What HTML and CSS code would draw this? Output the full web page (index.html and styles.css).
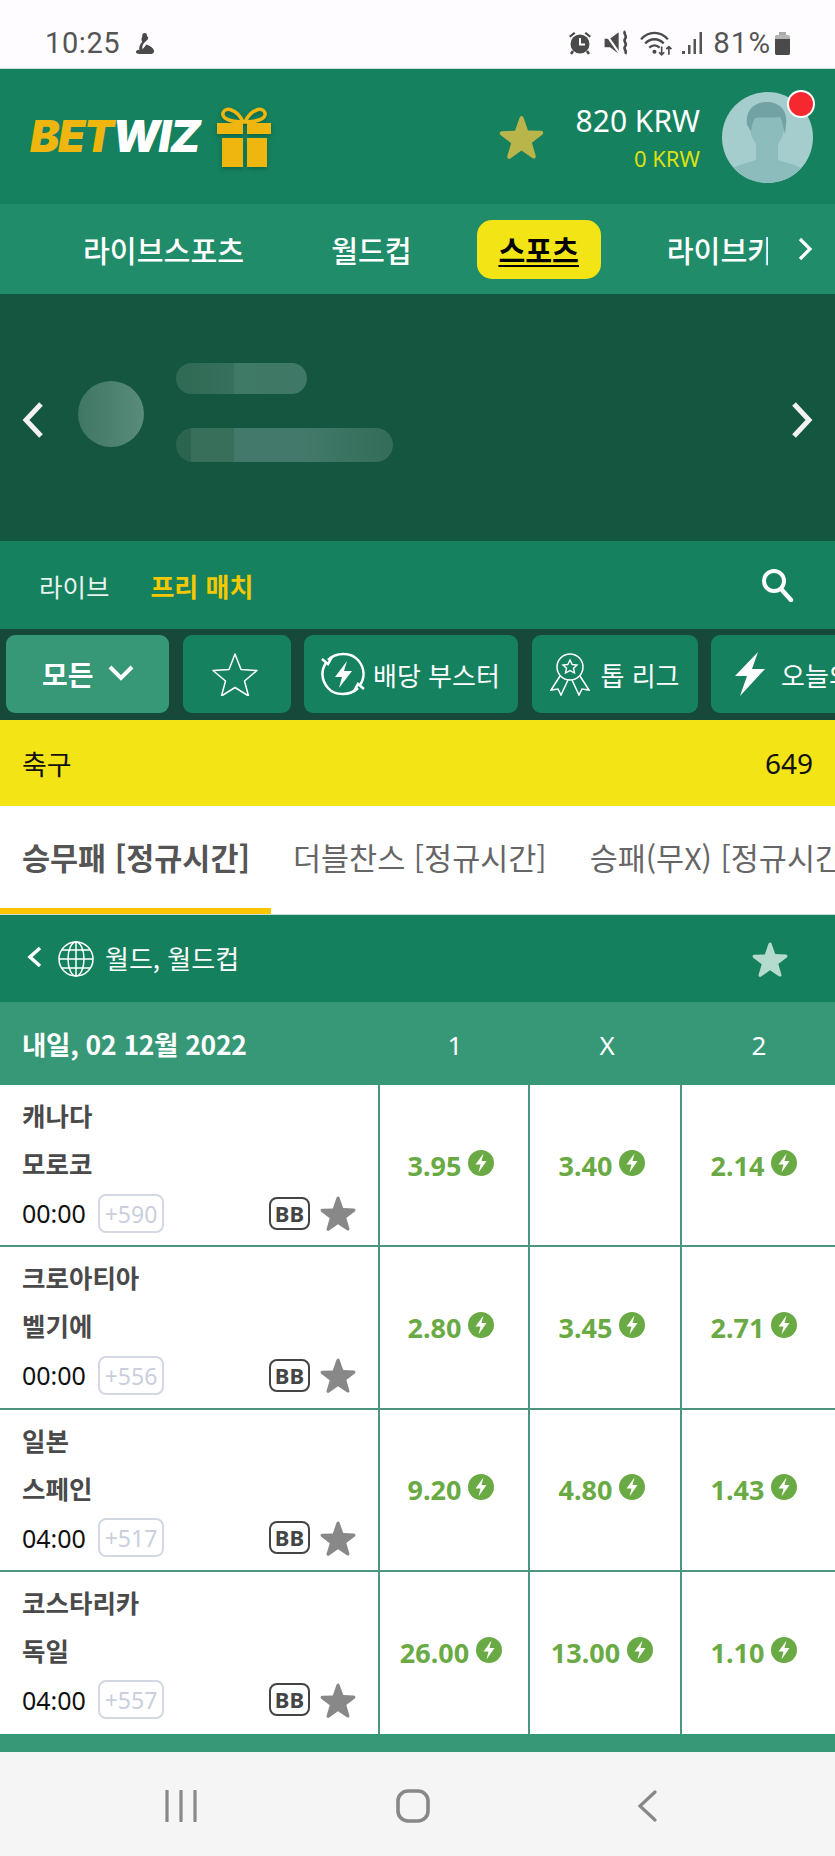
FILE: index.html
```html
<!DOCTYPE html>
<html lang="ko">
<head>
<meta charset="utf-8">
<title>BETWIZ</title>
<link rel="stylesheet" href="styles.css">
</head>
<body>
<svg class="defs" width="0" height="0">
  <defs>
    <symbol id="star" viewBox="0 0 36 36"><path d="M18 1.500c.8 0 1.300.5 1.600 1.300l3.600 10.300 10.600.3c1.600 0 2.200 2 1 3l-8.500 6.600 3.100 10.500c.4 1.500-1.200 2.700-2.500 1.800L18 29.200l-8.900 6.400c-1.300.9-2.900-.3-2.500-1.800l3.100-10.500-8.500-6.600c-1.200-1-.6-3 1-3l10.600-.3 3.600-10.300c.3-.8.800-1.300 1.600-1.300z" fill="currentColor"/></symbol>
    <symbol id="boost" viewBox="0 0 26 26"><circle cx="13" cy="13" r="13" fill="#6aaa44"/><path d="M15.500 3.500 7.500 14.500h5l-2 8 8-11.500h-5z" fill="#fff"/></symbol>
  </defs>
</svg>
<div class="page">
  <div class="status">
    <div class="status-left">
      <span class="clock">10:25</span>
      <svg class="st-mouse" viewBox="0 0 22 24"><path d="M10 1c2 0 3 1.500 2.500 3.200 1.500.8 1.800 2.300.8 3.600L10 11c-2 2-3 5-2 7l4-5c3 1 8 4 8 7 0 2-2 3-5 3H5c-3 0-4.500-1-4-2.500.4-1.300 2-2 3.500-1.500-.5-3 .5-6 3-8.500-1-2-1-3.500 0-5.500C7.500 2.500 8 1 10 1z" fill="#4a4a4a"/></svg>
    </div>
    <div class="status-right">
      <svg class="st-alarm" viewBox="0 0 24 24"><path d="M1 5 6 1l1.500 1.500-5 4zM23 5l-5-4-1.500 1.500 5 4z" fill="#4a4a4a"/><circle cx="12" cy="13" r="9.500" fill="#4a4a4a"/><path d="M5 20 3 23M19 20l2 3" stroke="#4a4a4a" stroke-width="2.500"/><path d="M12 7v6.500h5" stroke="#fff" stroke-width="2" fill="none"/></svg>
      <svg class="st-mute" viewBox="0 0 24 24"><path d="M1 8h5l8-6v20l-8-6H1z" fill="#4a4a4a"/><path d="M1 2l14 20" stroke="#fefcff" stroke-width="2"/><path d="M20 1c-2.500 3 2.500 4 0 7s2.500 4 0 7 2.500 4 0 7" stroke="#4a4a4a" stroke-width="2.400" fill="none"/></svg>
      <svg class="st-wifi" viewBox="0 0 32 24"><path d="M1 8c7-8.500 19-8.500 26 0M5 12c5-5.500 13-5.500 18 0M9 16c3-3 7-3 10 0" stroke="#4a4a4a" stroke-width="2.200" fill="none"/><circle cx="14" cy="20" r="2" fill="#4a4a4a"/><path d="M21 15v8m-2.500-2.500L21 23l2.500-2.500M28 23v-8m-2.500 2.500L28 15l2.500 2.500" stroke="#4a4a4a" stroke-width="1.600" fill="none"/></svg>
      <svg class="st-signal" viewBox="0 0 22 24"><path d="M1 20h3v3H1zM7 14h2.500v9H7zM12.500 8H15v15h-2.500zM18.500 1H21v22h-2.500z" fill="#555"/></svg>
      <span class="battery-text">81%</span>
      <svg class="st-battery" viewBox="0 0 17 24"><path d="M5 1h7v3H5z" fill="#aaa"/><path d="M1 6c0-1.500.8-2 2-2h11c1.200 0 2 .5 2 2v2H1z" fill="#b5b5b5"/><path d="M1 8h15v14c0 1.500-.8 2-2 2H3c-1.200 0-2-.5-2-2z" fill="#4a4a4a"/></svg>
    </div>
  </div>

  <header class="topbar">
    <div class="brand">
      <span class="logo"><span class="logo-bet">BET</span><span class="logo-wiz">WIZ</span></span>
      <svg class="gift" viewBox="0 0 54 60">
        <path d="M26 15C20 2 8-1 6 6c-1.500 6 9 9 20 9zM28 15C34 2 46-1 48 6c1.500 6-9 9-20 9z" fill="none" stroke="#eeb60f" stroke-width="3.500"/>
        <path d="M0 16h26v11H0zM30 16h24v11H30zM5 31h21v29H5zM30 31h20v29H30z" fill="#eeb60f"/>
      </svg>
    </div>
    <div class="account">
      <svg class="fav"><use href="#star"/></svg>
      <div class="balance">
        <div class="balance-main">820 KRW</div>
        <div class="balance-bonus">0 KRW</div>
      </div>
      <div class="avatar">
        <svg class="avatar-art" viewBox="0 0 91 91">
          <path d="M6 80c8-8 20-9 28-12V52h22v16c8 3 20 4 28 12-9 7-24 11-39 11S15 87 6 80z" fill="#8dbcbd"/>
          <path d="M27 30c0 14 8 28 18 28s18-14 18-28-8-20-18-20-18 6-18 20z" fill="#8dbcbd"/>
          <path d="M25 33c-2-16 8-23 20-23s21 8 19 22l-1 10c-2-8-3-14-5-17-9 1-20 0-25 1-2 3-3 7-4 13z" fill="#72a2a4"/>
        </svg>
        <span class="dot"></span>
      </div>
    </div>
  </header>

  <nav class="mainnav">
    <div class="mainnav-items">
      <a class="mn-item mn-live">라이브스포츠</a>
      <a class="mn-item mn-cup">월드컵</a>
      <a class="mn-item mn-active">스포츠</a>
      <a class="mn-item mn-casino">라이브카지노</a>
    </div>
    <svg class="mn-next" viewBox="0 0 16 24"><path d="M3 2l10 10L3 22" stroke="#fff" stroke-width="3.200" fill="none"/></svg>
  </nav>

  <section class="banner">
    <svg class="arrow" viewBox="0 0 22 36"><path d="M19 2 4 18l15 16" stroke="#f2f2f2" stroke-width="5" fill="none"/></svg>
    <div class="skel-circle"></div>
    <div class="skel-lines">
      <div class="skel-pill skel-a"></div>
      <div class="skel-pill skel-b"></div>
    </div>
    <svg class="arrow arrow-right" viewBox="0 0 22 36"><path d="M3 2l15 16L3 34" stroke="#f2f2f2" stroke-width="5" fill="none"/></svg>
  </section>

  <section class="filter">
    <span class="filter-live">라이브</span>
    <span class="filter-pre">프리 매치</span>
    <svg class="search" viewBox="0 0 34 34"><circle cx="14" cy="13" r="10" stroke="#fff" stroke-width="4" fill="none"/><path d="M21 21l10 11" stroke="#fff" stroke-width="4.500" stroke-linecap="round"/></svg>
  </section>

  <section class="chips">
    <div class="chip chip-all">모든<svg class="chip-caret" viewBox="0 0 26 16"><path d="M2 2l11 11L24 2" stroke="#fff" stroke-width="4" fill="none"/></svg></div>
    <div class="chip chip-fav"><svg class="chip-star" viewBox="0 0 46 44"><path d="M23 2l6 15.500 16 1-12.500 10.500 4 15L23 35.500 9.500 44l4-15L1 18.500l16-1z" fill="none" stroke="#fff" stroke-width="1.500" stroke-linejoin="round"/></svg></div>
    <div class="chip chip-boost">
      <svg class="chip-icon" viewBox="0 0 44 44"><path d="M7 8C15 0 30 0 37 8c7 8 7 18 2 25M37 36c-8 8-23 8-30 0C0 28 0 18 5 11" stroke="#fff" stroke-width="2.500" fill="none"/><path d="M1 7l6 5 4-7M43 37l-6-5-4 7" stroke="#fff" stroke-width="2.500" fill="none"/><path d="M26 9 14 25h7l-3 11 13-17h-8z" fill="#fff"/></svg>
      <span>배당 부스터</span>
    </div>
    <div class="chip chip-top">
      <svg class="chip-icon chip-ribbon" viewBox="0 0 40 44"><circle cx="20" cy="15" r="13" fill="none" stroke="#fff" stroke-width="1.500"/><path d="M20 8l2.200 4.500 4.800.5-3.500 3.300 1 4.700-4.500-2.400-4.500 2.400 1-4.700-3.500-3.300 4.800-.5z" fill="none" stroke="#fff" stroke-width="1.400"/><path d="M10 24 1 38l7-1 3 6 7-15M30 24l9 14-7-1-3 6-7-15" fill="none" stroke="#fff" stroke-width="1.500"/></svg>
      <span>톱 리그</span>
    </div>
    <div class="chip chip-today">
      <svg class="chip-bolt" viewBox="0 0 32 44"><path d="M24 0 1 24h12L6 44l25-27H18z" fill="#fff"/></svg>
      <span>오늘의 경기</span>
    </div>
  </section>

  <section class="sport">
    <span>축구</span>
    <span class="sport-count">649</span>
  </section>

  <section class="markets">
    <div class="market market-on">승무패 [정규시간]</div>
    <div class="market">더블찬스 [정규시간]</div>
    <div class="market">승패(무X) [정규시간]</div>
  </section>

  <section class="league">
    <svg class="league-back" viewBox="0 0 16 22"><path d="M13 2 3 11l10 9" stroke="#fff" stroke-width="3.500" fill="none"/></svg>
    <svg class="globe" viewBox="0 0 36 36"><g fill="none" stroke="#fff" stroke-width="1.500"><circle cx="18" cy="18" r="17"/><ellipse cx="18" cy="18" rx="8" ry="17"/><path d="M18 1v34M1 18h34M4 9h28M4 27h28"/></g></svg>
    <span class="league-name">월드, 월드컵</span>
    <svg class="league-star"><use href="#star"/></svg>
  </section>

  <section class="datehead">
    <div class="date">내일, 02 12월 2022</div>
    <div class="col-head">1</div>
    <div class="col-head">X</div>
    <div class="col-head">2</div>
  </section>

  <section class="matches">
    <article class="match">
      <div class="info">
        <div class="team">캐나다</div>
        <div class="team">모로코</div>
        <div class="meta"><span class="time">00:00</span><span class="more">+590</span><span class="bb">BB</span><svg class="m-star"><use href="#star"/></svg></div>
      </div>
      <div class="odd"><span>3.95</span><svg class="bolt"><use href="#boost"/></svg></div>
      <div class="odd"><span>3.40</span><svg class="bolt"><use href="#boost"/></svg></div>
      <div class="odd"><span>2.14</span><svg class="bolt"><use href="#boost"/></svg></div>
    </article>
    <article class="match">
      <div class="info">
        <div class="team">크로아티아</div>
        <div class="team">벨기에</div>
        <div class="meta"><span class="time">00:00</span><span class="more">+556</span><span class="bb">BB</span><svg class="m-star"><use href="#star"/></svg></div>
      </div>
      <div class="odd"><span>2.80</span><svg class="bolt"><use href="#boost"/></svg></div>
      <div class="odd"><span>3.45</span><svg class="bolt"><use href="#boost"/></svg></div>
      <div class="odd"><span>2.71</span><svg class="bolt"><use href="#boost"/></svg></div>
    </article>
    <article class="match">
      <div class="info">
        <div class="team">일본</div>
        <div class="team">스페인</div>
        <div class="meta"><span class="time">04:00</span><span class="more">+517</span><span class="bb">BB</span><svg class="m-star"><use href="#star"/></svg></div>
      </div>
      <div class="odd"><span>9.20</span><svg class="bolt"><use href="#boost"/></svg></div>
      <div class="odd"><span>4.80</span><svg class="bolt"><use href="#boost"/></svg></div>
      <div class="odd"><span>1.43</span><svg class="bolt"><use href="#boost"/></svg></div>
    </article>
    <article class="match">
      <div class="info">
        <div class="team">코스타리카</div>
        <div class="team">독일</div>
        <div class="meta"><span class="time">04:00</span><span class="more">+557</span><span class="bb">BB</span><svg class="m-star"><use href="#star"/></svg></div>
      </div>
      <div class="odd"><span>26.00</span><svg class="bolt"><use href="#boost"/></svg></div>
      <div class="odd"><span>13.00</span><svg class="bolt"><use href="#boost"/></svg></div>
      <div class="odd"><span>1.10</span><svg class="bolt"><use href="#boost"/></svg></div>
    </article>
  </section>

  <div class="footer-strip"></div>

  <div class="sysnav">
    <svg class="sys-recent" viewBox="0 0 32 32"><path d="M2 1v30M16 1v30M30 1v30" stroke="#888" stroke-width="3.200" stroke-linecap="round"/></svg>
    <svg class="sys-home" viewBox="0 0 34 34"><rect x="2" y="2" width="30" height="30" rx="10" fill="none" stroke="#888" stroke-width="3.600"/></svg>
    <svg class="sys-back" viewBox="0 0 20 32"><path d="M18 2 3 16l15 14" stroke="#888" stroke-width="3.200" fill="none" stroke-linecap="round"/></svg>
  </div>
</div>
</body>
</html>
```

FILE: styles.css
```css
* { box-sizing: border-box; }
html, body { margin: 0; padding: 0; }
body {
  width: 835px;
  height: 1856px;
  overflow: hidden;
  background: #fff;
  font-family: "Noto Sans", "Noto Sans CJK KR", sans-serif;
  color: #444;
}
.defs { display: block; height: 0; }
.page { display: flex; flex-direction: column; width: 835px; height: 1856px; overflow: hidden; }

/* Status bar */
.status {
  flex: 0 0 69px;
  background: #fefcff;
  border-bottom: 1px solid #cfe0da;
  display: flex;
  align-items: center;
  justify-content: space-between;
  padding: 18px 44px 0 45px;
  color: #555;
  font-family: Roboto, sans-serif;
  font-size: 29px;
}
.status-left, .status-right { display: flex; align-items: center; }
.clock { letter-spacing: .6px; }
.st-mouse { width: 21px; height: 23px; margin-left: 15px; }
.st-alarm { width: 24px; height: 24px; }
.st-mute { width: 27px; height: 26px; margin-left: 11px; }
.st-wifi { width: 33px; height: 25px; margin-left: 10px; }
.st-signal { width: 22px; height: 24px; margin-left: 8px; }
.battery-text { margin-left: 10px; letter-spacing: 1px; font-size: 29.500px; }
.st-battery { width: 17px; height: 24px; margin-left: 3px; }

/* Header */
.topbar {
  flex: 0 0 135px;
  background: #15815e;
  display: flex;
  align-items: center;
  justify-content: space-between;
  padding: 0 22px 0 30px;
}
.brand { display: flex; align-items: center; }
.logo {
  font-family: Inter, sans-serif;
  font-style: italic;
  font-weight: 900;
  font-size: 44px;
  line-height: 1;
  letter-spacing: -1.500px;
  width: 187px;
  margin-top: -1px;
  white-space: nowrap;
}
.logo-bet { color: #eeb60f; }
.logo-wiz { color: #fff; }
.gift { width: 54px; height: 60px; filter: drop-shadow(0 2px 2px rgba(0, 60, 40, .4)); }
.account { display: flex; align-items: center; }
.fav { width: 45px; height: 45px; color: #b9b54a; margin-right: 30px; }
.balance { text-align: right; width: 126px; margin-right: 1px; white-space: nowrap; }
.balance-main { color: #fff; font-size: 30px; line-height: 40px; margin-top: 1px; }
.balance-bonus { color: #dde010; font-size: 22px; line-height: 30px; margin-top: 2px; }
.avatar {
  position: relative;
  width: 91px;
  height: 91px;
  margin-left: 21px;
  margin-top: 2px;
  border-radius: 50%;
  background: #a6cdcd;
}
.avatar-art { display: block; width: 91px; height: 91px; border-radius: 50%; }
.dot {
  position: absolute;
  right: 0;
  top: 0;
  width: 24px;
  height: 24px;
  border-radius: 50%;
  background: #f5282f;
  box-shadow: 0 0 0 2px #fff;
}

/* Main nav */
.mainnav {
  flex: 0 0 90px;
  background: #208c69;
  display: flex;
  align-items: center;
  padding-left: 83px;
}
.mainnav-items { display: flex; align-items: center; width: 685px; overflow: hidden; }
.mn-item {
  flex: none;
  color: #fff;
  font-family: "Noto Sans CJK KR", sans-serif;
  font-size: 29.200px;
  font-weight: 500;
  white-space: nowrap;
  line-height: 59px;
}
.mn-cup { margin-left: 87px; }
.mn-active {
  margin-left: 65px;
  width: 124px;
  height: 59px;
  background: #f3e415;
  color: #000;
  font-weight: 700;
  text-align: center;
  border-radius: 15px;
  text-decoration: underline;
  text-underline-offset: 3px;
}
.mn-casino { margin-left: 66px; }
.mn-next { width: 16px; height: 24px; margin-left: 29px; }

/* Banner */
.banner {
  flex: 0 0 247px;
  background: #145640;
  display: flex;
  align-items: center;
  padding: 0 22px;
}
.arrow { width: 22px; height: 36px; margin-top: 4px; flex: none; }
.arrow-right { margin-left: auto; }
.skel-circle {
  width: 66px;
  height: 66px;
  border-radius: 50%;
  margin-left: 34px;
  margin-bottom: 8px;
  background: linear-gradient(90deg, #3f7663, #5a8b7b);
}
.skel-lines { display: flex; flex-direction: column; gap: 34px; margin-left: 32px; margin-bottom: 10px; }
.skel-pill {
  height: 31px;
  border-radius: 16px;
  background: linear-gradient(90deg, #2f6a55 0, #37705c 44%, #3f7a66 44%, #3f7866 100%);
}
.skel-a { width: 131px; }
.skel-b {
  width: 217px;
  height: 34px;
  border-radius: 17px;
  background: linear-gradient(90deg, #2b6550 0, #2b6550 7%, #376f5b 7%, #376f5b 26.500%, #42796a 26.500%, #42796a 60%, #336c58 100%);
}

/* Live / Pre filter */
.filter {
  flex: 0 0 88px;
  background: #15815e;
  display: flex;
  align-items: center;
  padding: 0 41px 0 39px;
  font-family: "Noto Sans CJK KR", sans-serif;
  font-size: 25.500px;
}
.filter-live { color: #e8f2ee; }
.filter-pre { color: #f4c800; font-weight: 700; margin-left: 41px; font-size: 26px; }
.search { width: 34px; height: 34px; margin-left: auto; margin-top: -1px; }

/* Chips */
.chips {
  flex: 0 0 91px;
  background: #17493a;
  display: flex;
  align-items: flex-start;
  gap: 13.500px;
  padding: 6px 0 0 6px;
  overflow: hidden;
}
.chip {
  flex: none;
  height: 78px;
  background: #15815e;
  border-radius: 9px;
  display: flex;
  align-items: center;
  color: #fff;
  font-family: "Noto Sans CJK KR", sans-serif;
  font-size: 26px;
  white-space: nowrap;
}
.chip-all { width: 163px; background: #369877; font-size: 28px; font-weight: 700; padding-left: 36px; }
.chip-caret { width: 26px; height: 16px; margin-left: 14px; margin-top: -2px; }
.chip-fav { width: 108px; justify-content: center; padding-right: 3px; }
.chip-star { width: 46px; height: 44px; }
.chip-boost { width: 214px; padding-left: 17px; }
.chip-icon { width: 44px; height: 44px; margin-right: 8px; }
.chip-top { width: 166px; padding-left: 18px; }
.chip-ribbon { width: 40px; margin-right: 11px; }
.chip-today { width: 240px; padding-left: 23px; }
.chip-bolt { width: 32px; height: 44px; margin-right: 15px; }

/* Sport bar */
.sport {
  flex: 0 0 86px;
  background: #f3e415;
  color: #111;
  display: flex;
  align-items: center;
  justify-content: space-between;
  padding: 0 22px 0 22px;
  font-family: "Noto Sans CJK KR", sans-serif;
  font-size: 27px;
}
.sport-count { font-family: "Noto Sans", sans-serif; font-size: 28px; }

/* Market tabs */
.markets {
  flex: 0 0 109px;
  background: #fff;
  border-bottom: 1px solid #c6dcd8;
  display: flex;
  overflow: hidden;
  font-family: "Noto Sans CJK KR", sans-serif;
  font-size: 30.500px;
  color: #666;
}
.market {
  flex: none;
  height: 108px;
  padding: 0 22px;
  line-height: 102px;
  white-space: nowrap;
}
.market-on { color: #555; font-weight: 700; width: 271px; border-bottom: 6px solid #fdc500; }
.market + .market { padding-right: 21px; }

/* League */
.league {
  flex: 0 0 87px;
  background: #15805d;
  display: flex;
  align-items: center;
  padding: 0 47px 0 27px;
  color: #fff;
  font-family: "Noto Sans CJK KR", sans-serif;
  font-size: 26px;
}
.league-back { width: 16px; height: 22px; margin-top: -3px; }
.globe { width: 36px; height: 36px; margin-left: 15px; }
.league-name { margin-left: 11px; margin-bottom: 3px; }
.league-star { width: 36px; height: 36px; color: #b5dbcf; margin-left: auto; }

/* Date header */
.datehead {
  flex: 0 0 83px;
  background: #369877;
  display: grid;
  grid-template-columns: 379px 152px 152px 152px;
  align-items: center;
  color: #fff;
  font-size: 26px;
}
.date {
  font-family: "Noto Sans CJK KR", sans-serif;
  font-weight: 700;
  font-size: 26.500px;
  padding-left: 22px;
  letter-spacing: -.3px;
}
.col-head { text-align: center; margin-top: 2px; }

/* Matches */
.matches { flex: 0 0 649px; background: #fff; }
.match {
  height: 162.250px;
  display: grid;
  grid-template-columns: 380px 150px 152px 153px;
  border-bottom: 2px solid #4d9580;
}
.match:last-child { border-bottom: 0; }
.info {
  padding: 6px 22px 0 22px;
  border-right: 2px solid #4d9580;
}
.team {
  height: 48px;
  line-height: 48px;
  font-family: "Noto Sans CJK KR", sans-serif;
  font-size: 25.500px;
  font-weight: 700;
  color: #4a4a4a;
}
.meta { display: flex; align-items: center; height: 50px; margin-top: 1px; }
.time { color: #111; font-size: 25px; width: 76px; }
.more {
  width: 66px;
  height: 39px;
  line-height: 36px;
  text-align: center;
  border: 2px solid #d3d8e3;
  border-radius: 8px;
  color: #c9cfdd;
  font-size: 23px;
}
.bb {
  width: 41px;
  height: 33px;
  line-height: 28px;
  margin-left: auto;
  text-align: center;
  border: 2px solid #444;
  border-radius: 8px;
  color: #444;
  font-size: 22px;
  font-weight: 700;
}
.m-star { width: 36px; height: 36px; margin-left: 10px; color: #888; }
.odd {
  display: flex;
  align-items: center;
  justify-content: center;
  gap: 7px;
  border-right: 2px solid #4d9580;
  color: #6aaa44;
  font-size: 27px;
  font-weight: 700;
  padding-right: 6px;
}
.odd:last-child { border-right: 0; padding-right: 9px; }
.bolt { width: 26px; height: 26px; margin-bottom: 5px; }

/* Footer */
.footer-strip { flex: 0 0 18px; background: #369877; }
.sysnav {
  flex: 1;
  background: #f5f5f5;
  display: flex;
  align-items: center;
  padding: 0 0 0 165px;
}
.sys-recent { width: 32px; height: 32px; margin-top: 3px; }
.sys-home { width: 34px; height: 34px; margin-left: 199px; margin-top: 3px; }
.sys-back { width: 20px; height: 32px; margin-left: 207px; margin-top: 3px; }
```
